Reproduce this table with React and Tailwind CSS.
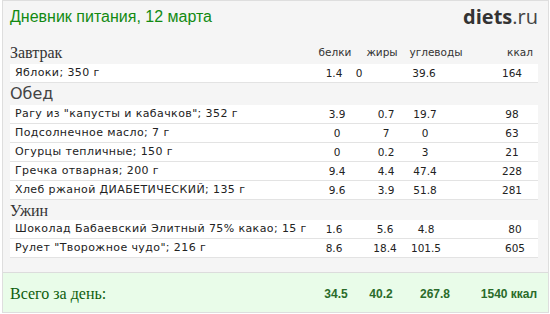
import React from "react";

const SANS = "font-['DejaVu_Sans',Verdana,sans-serif]";
const SERIF = "font-['Liberation_Serif','Times_New_Roman',serif]";
const BOLD = "font-['Liberation_Sans',Arial,sans-serif] font-bold text-[12px] text-[#2a6b2a]";

const COLS = {
  head: ["", "ml-[47px]", "ml-[54px]", "ml-[84px]", "pr-[18px]"],
  zavtrak: ["", "ml-[25px]", "ml-[65px]", "ml-[88px]", "pr-[26px]"],
  obed: ["", "ml-[49px]", "ml-[39px]", "ml-[87px]", "pr-[26px]"],
  uzhin: ["", "ml-[51px]", "ml-[41px]", "ml-[89px]", "pr-[23px]"],
  total: ["", "ml-[45px]", "ml-[54px]", "ml-[74px]", "pr-[29px]"],
};

function Anchor({ cls, children }) {
  return (
    <div className={"w-0 flex justify-center whitespace-nowrap shrink-0 " + cls}>
      <span>{children}</span>
    </div>
  );
}

function Row({ name, vals, cols }) {
  return (
    <div className={"flex h-[19px] items-center bg-white border-b border-[#e3e3e3] leading-[18px] text-[#222] " + SANS + " " + cols[4]}>
      <div className="flex-1 min-w-0 whitespace-nowrap pl-[5px] text-[11px] tracking-[0.4px]">{name}</div>
      {vals.map((v, i) => (
        <Anchor key={i} cls={"text-[10.5px] " + cols[i]}>{v}</Anchor>
      ))}
    </div>
  );
}

export default function App() {
  return (
    <div className="w-[550px] h-[314px] bg-white pl-[2px]">
      <div className="w-[547px] h-[313px] border border-[#dedede] bg-[#f5f5f5] flex flex-col">
        <div className="h-[31px] flex items-center justify-between pl-[7px] pr-[10px]">
          <div className="font-['Liberation_Sans',Arial,sans-serif] text-[16px] text-[#128a12]">Дневник питания, 12 марта</div>
          <div className="font-['Open_Sans',sans-serif] text-[20px] text-[#333] leading-none">
            <span className="font-bold">diets</span>
            <span className="text-[#444]">.ru</span>
          </div>
        </div>
        <div className="pl-[7px] pr-[10px] flex flex-col">
          <div className={"mt-[10px] h-[22px] flex items-center text-[10.5px] text-[#333] " + SANS + " " + COLS.head[4]}>
            <div className={"flex-1 text-[16px] text-[#333] " + SERIF}>Завтрак</div>
            <Anchor cls="">белки</Anchor>
            <Anchor cls={COLS.head[1]}>жиры</Anchor>
            <Anchor cls={COLS.head[2]}>углеводы</Anchor>
            <Anchor cls={COLS.head[3]}>ккал</Anchor>
          </div>
          <Row name="Яблоки; 350 г" vals={["1.4", "0", "39.6", "164"]} cols={COLS.zavtrak} />
          <div className={"h-[22px] flex items-end pb-[1px] text-[16px] leading-[20px] text-[#444] " + SANS}>Обед</div>
          <Row name={'Рагу из "капусты и кабачков"; 352 г'} vals={["3.9", "0.7", "19.7", "98"]} cols={COLS.obed} />
          <Row name="Подсолнечное масло; 7 г" vals={["0", "7", "0", "63"]} cols={COLS.obed} />
          <Row name="Огурцы тепличные; 150 г" vals={["0", "0.2", "3", "21"]} cols={COLS.obed} />
          <Row name="Гречка отварная; 200 г" vals={["9.4", "4.4", "47.4", "228"]} cols={COLS.obed} />
          <Row name="Хлеб ржаной ДИАБЕТИЧЕСКИЙ; 135 г" vals={["9.6", "3.9", "51.8", "281"]} cols={COLS.obed} />
          <div className={"h-[20px] flex items-center pt-[2px] text-[16px] text-[#333] " + SERIF}>Ужин</div>
          <Row name="Шоколад Бабаевский Элитный 75% какао; 15 г" vals={["1.6", "5.6", "4.8", "80"]} cols={COLS.uzhin} />
          <Row name={'Рулет "Творожное чудо"; 216 г'} vals={["8.6", "18.4", "101.5", "605"]} cols={COLS.uzhin} />
        </div>
        <div className="mt-auto h-[40px] border-t border-[#dcdcdc] bg-[#e9fce9] pl-[7px] pr-[10px]">
          <div className={"h-full flex items-center pt-[2px] " + COLS.total[4]}>
            <div className={"flex-1 text-[16px] text-[#0d5e0d] " + SERIF}>Всего за день:</div>
            <Anchor cls={BOLD}>34.5</Anchor>
            <Anchor cls={BOLD + " " + COLS.total[1]}>40.2</Anchor>
            <Anchor cls={BOLD + " " + COLS.total[2]}>267.8</Anchor>
            <Anchor cls={BOLD + " " + COLS.total[3]}>1540 ккал</Anchor>
          </div>
        </div>
      </div>
    </div>
  );
}
